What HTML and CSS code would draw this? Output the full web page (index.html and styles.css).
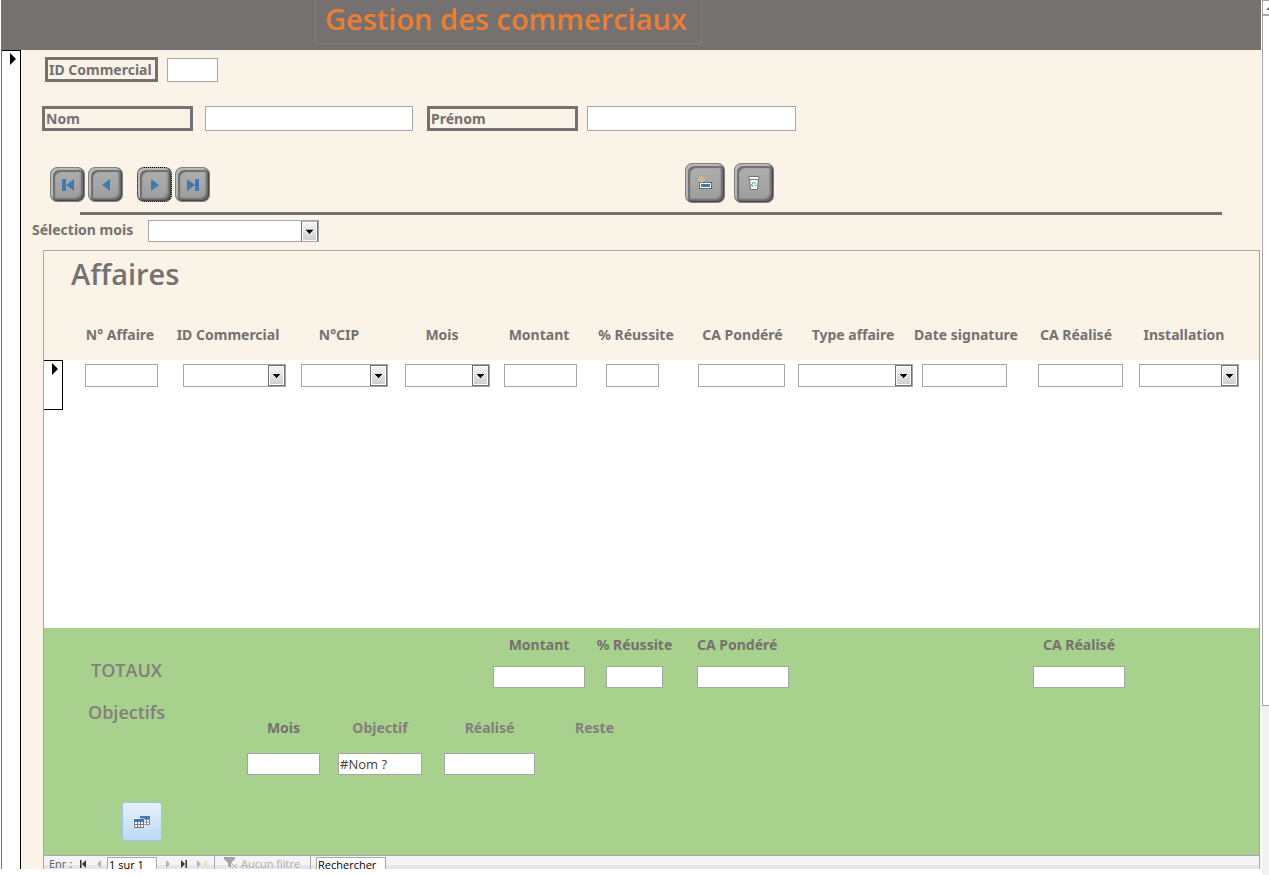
FILE: index.html
```html
<!DOCTYPE html>
<html lang="fr">
<head>
<meta charset="utf-8">
<title>Gestion des commerciaux</title>
<link rel="stylesheet" href="styles.css">
</head>
<body>
<div class="window">
  <div class="form">
    <header class="banner"><h1 class="title">Gestion des commerciaux</h1></header>
    <div class="record">
      <div class="selector"><svg width="6" height="12" viewBox="0 0 6 12"><path d="M0 0L6 6L0 12Z"/></svg></div>
      <main class="detail">
        <div class="row row-id">
          <label class="boxed boxed-id" for="id">ID Commercial</label>
          <input class="field field-id" id="id" type="text">
        </div>
        <div class="row row-name">
          <label class="boxed" for="nom">Nom</label>
          <input class="field field-nom" id="nom" type="text">
          <label class="boxed" for="prenom">Prénom</label>
          <input class="field field-prenom" id="prenom" type="text">
        </div>
        <div class="row toolbar">
          <div class="pair">
            <button class="key" type="button" aria-label="Premier enregistrement"><svg width="14" height="14" viewBox="0 0 14 14"><path d="M1 1h4v12H1zM13 1v12L5 7z"/></svg></button>
            <button class="key" type="button" aria-label="Enregistrement précédent"><svg width="14" height="14" viewBox="0 0 14 14"><path d="M11 1v12L3 7z"/></svg></button>
          </div>
          <div class="pair">
            <button class="key key-focus" type="button" aria-label="Enregistrement suivant"><svg width="14" height="14" viewBox="0 0 14 14"><path d="M3 1v12l8-6z"/></svg></button>
            <button class="key" type="button" aria-label="Dernier enregistrement"><svg width="14" height="14" viewBox="0 0 14 14"><path d="M1 1v12l8-6zM9 1h4v12H9z"/></svg></button>
          </div>
          <div class="actions">
            <button class="key key-large" type="button" aria-label="Nouvel enregistrement"><svg width="16" height="16" viewBox="0 0 16 16"><rect x="2.5" y="7.5" width="12" height="6" fill="#fff" stroke="#666"/><rect x="4" y="9" width="9" height="3" fill="#3f7ab5"/><path d="M4.500 1v7M1 4.500h7M2 2l5 5M7 2L2 7" stroke="#f5c069" fill="none"/><circle cx="4.500" cy="4.500" r="1" fill="#aaa"/></svg></button>
            <button class="key key-large" type="button" aria-label="Supprimer"><svg width="16" height="16" viewBox="0 0 16 16"><path d="M3.500 2.500h9l-1 12h-7z" fill="#fff" stroke="#707070"/><path d="M3 1.500h10v3H3z" fill="#fff" stroke="#777"/><path d="M8 7l2 2.500M10.500 10l-1 1H8.500M7.500 11H6l-.5-1L7.500 7" stroke="#4a9a80" fill="none"/></svg></button>
          </div>
        </div>
        <hr class="rule">
        <div class="row row-month">
          <label for="mois">Sélection mois</label>
          <select class="combo combo-month" id="mois"><option></option></select>
        </div>

        <section class="panel">
          <h2 class="panel-title">Affaires</h2>
          <table class="deals">
            <colgroup><col class="c0"><col class="c1"><col class="c2"><col class="c3"><col class="c4"><col class="c5"><col class="c6"><col class="c7"><col class="c8"><col class="c9"><col class="c10"><col class="c11"><col class="c12"></colgroup>
            <thead><tr><td></td><th>N° Affaire</th><th>ID Commercial</th><th>N°CIP</th><th>Mois</th><th>Montant</th><th>% Réussite</th><th>CA Pondéré</th><th>Type affaire</th><th>Date signature</th><th>CA Réalisé</th><th>Installation</th><td></td></tr></thead>
            <tbody><tr>
              <td><div class="row-selector"><svg width="6" height="12" viewBox="0 0 6 12"><path d="M0 0L6 6L0 12Z"/></svg></div></td>
              <td><input class="field w73" type="text" aria-label="N° Affaire"></td>
              <td><select class="combo w103" aria-label="ID Commercial"><option></option></select></td>
              <td><select class="combo w87" aria-label="N°CIP"><option></option></select></td>
              <td><select class="combo w85" aria-label="Mois"><option></option></select></td>
              <td class="small-indent"><input class="field w73" type="text" aria-label="Montant"></td>
              <td class="wide-indent"><input class="field w53" type="text" aria-label="% Réussite"></td>
              <td class="small-indent"><input class="field w87" type="text" aria-label="CA Pondéré"></td>
              <td class="no-indent"><select class="combo w115" aria-label="Type affaire"><option></option></select></td>
              <td><input class="field w85" type="text" aria-label="Date signature"></td>
              <td><input class="field w85" type="text" aria-label="CA Réalisé"></td>
              <td class="small-indent"><select class="combo w100" aria-label="Installation"><option></option></select></td>
              <td></td>
            </tr></tbody>
          </table>
          <div class="blank"></div>
          <div class="summary">
            <div class="totals">
              <h3 class="side-title">TOTAUX</h3>
              <div class="stack w92"><label for="t1">Montant</label><input class="field" id="t1" type="text"></div>
              <div class="stack w57"><label for="t2">% Réussite</label><input class="field" id="t2" type="text"></div>
              <div class="stack stack-start w92"><label for="t3">CA Pondéré</label><input class="field" id="t3" type="text"></div>
              <div class="stack w92"><label for="t4">CA Réalisé</label><input class="field" id="t4" type="text"></div>
            </div>
            <h3 class="goals-title">Objectifs</h3>
            <div class="goals">
              <div class="stack w73"><label for="g1">Mois</label><input class="field" id="g1" type="text"></div>
              <div class="stack w84 muted"><label for="g2">Objectif</label><input class="field" id="g2" type="text" value="#Nom ?"></div>
              <div class="stack w91 muted"><label for="g3">Réalisé</label><input class="field" id="g3" type="text"></div>
              <div class="rest muted">Reste</div>
            </div>
            <button class="open" type="button" aria-label="Ouvrir la table"><svg width="18" height="14" viewBox="0 0 18 14"><path d="M7 1h10v9H7z" fill="#fff"/><path d="M7 4.500h9.500v5H7M10.500 4v6M13.500 4v6M7 7h9" stroke="#888" fill="none"/><path d="M7 1h10v3H7z" fill="#3f7ab5"/><path d="M.5 3.500h11v9H.5z" fill="#fff"/><path d="M1.500 6v6.500h9V6M4.500 6v6M7.500 6v6M1 9.500h9" stroke="#777" fill="none"/><path d="M1 4h10v3H1z" fill="#3f7ab5"/></svg></button>
          </div>
          <nav class="navbar" aria-label="Enregistrements">
            <label for="pos">Enr :</label>
            <button class="nav" type="button" aria-label="Premier"><svg width="8" height="8" viewBox="0 0 8 8"><path d="M1 0h1.500v8H1zM7 0v8L3 4z"/></svg></button>
            <button class="nav off" type="button" aria-label="Précédent"><svg width="8" height="8" viewBox="0 0 8 8"><path d="M6 0v8L2 4z"/></svg></button>
            <input class="nav-input pos" id="pos" type="text" value="1 sur 1">
            <button class="nav nav-next off" type="button" aria-label="Suivant"><svg width="8" height="8" viewBox="0 0 8 8"><path d="M2 0v8l4-4z"/></svg></button>
            <button class="nav" type="button" aria-label="Dernier"><svg width="8" height="8" viewBox="0 0 8 8"><path d="M1 0v8l4-4zM5.500 0H7v8H5.500z"/></svg></button>
            <button class="nav nav-new off" type="button" aria-label="Nouveau"><svg width="14" height="8" viewBox="0 0 14 8"><path d="M1 0v8l4-4z"/><path d="M9.500 0v8M6 4h7M7 1l5 6M12 1L7 7" stroke="#f0dfa8" fill="none"/></svg></button>
            <button class="filter" type="button"><svg width="15" height="13" viewBox="0 0 15 13"><path d="M1 1h11v2L8 7v5L5 10V7L1 3z"/><path d="M8 7l6 5M14 8l-5 4" stroke="#b4b4b4" fill="none"/></svg>Aucun filtre</button>
            <input class="nav-input search" type="text" value="Rechercher" aria-label="Rechercher">
          </nav>
        </section>
      </main>
    </div>
  </div>
  <div class="scroll"><div class="scroll-up"><svg width="6" height="3" viewBox="0 0 6 3"><path d="M0 3L3 0L6 3Z" fill="#666"/></svg></div><div class="thumb"></div></div>
</div>
</body>
</html>
```
FILE: styles.css
```css
* { box-sizing: border-box; }
body {
  margin: 0;
  background: #fff;
  color: #757170;
  font: 700 14px/18px "Noto Sans", "Open Sans", sans-serif;
}
h1, h2, h3 { margin: 0; font-family: "Open Sans", sans-serif; font-weight: 600; }
svg { display: block; }
button { padding: 0; border: 0; background: none; font: inherit; }

.window { display: flex; gap: 1px; min-height: 100vh; padding-left: 1px; overflow: hidden; }
.form {
  flex: 1;
  min-width: 0;
  display: flex;
  flex-direction: column;
  margin-bottom: 6px;
  border-left: 1px solid #757170;
}
.banner { height: 50px; background: #757170; padding-left: 313px; }
.title {
  width: 387px;
  height: 44px;
  padding-left: 9px;
  border: 1px solid #827e7d;
  border-top: 0;
  color: #ed7d31;
  font-size: 29px;
  line-height: 38px;
  white-space: nowrap;
}
.record { flex: 1; display: flex; }
.selector { width: 19px; padding: 2px 0 0 8px; border-top: 1px solid #000; border-right: 1px solid #000; }
.detail {
  flex: 1;
  min-width: 0;
  display: flex;
  flex-direction: column;
  padding: 7px 1px 0 22px;
  background: #faf3e8;
}
.row { display: flex; align-items: center; }
.field {
  display: block;
  height: 23px;
  min-width: 0;
  padding: 0 1px;
  border: 1px solid #a6a6a6;
  border-radius: 0;
  background: #fff;
  color: #404040;
  font: 400 13px/18px "Open Sans", sans-serif;
}
.combo {
  display: block;
  height: 23px;
  border: 1px solid #a6a6a6;
  border-radius: 0;
  appearance: none;
  background: #fff url("data:image/svg+xml,%3Csvg xmlns='http://www.w3.org/2000/svg' width='17' height='21'%3E%3Cdefs%3E%3ClinearGradient id='g' x2='0' y2='1'%3E%3Cstop stop-color='%23f4f4f4'/%3E%3Cstop offset='1' stop-color='%23cfcfcf'/%3E%3C/linearGradient%3E%3C/defs%3E%3Crect x='.5' y='.5' width='16' height='20' fill='%23fff' stroke='%23707070'/%3E%3Crect x='2' y='2' width='13' height='17' fill='url(%23g)'/%3E%3Cpath d='M5 9h7v1h-1v1h-1v1h-1v1h-1v-1h-1v-1h-1v-1h-1z'/%3E%3C/svg%3E") right center no-repeat;
}
.row-id { gap: 9px; padding-left: 2px; }
.boxed { width: 151px; height: 25px; padding: 0 1px; border: 3px solid #757170; line-height: 19px; white-space: nowrap; }
.boxed-id { width: 113px; }
.field-id { width: 51px; height: 24px; }
.row-name { margin-top: 24px; margin-left: -1px; }
.row-name .field { height: 25px; }
.field-nom { width: 208px; margin: 0 14px 0 12px; }
.field-prenom { width: 209px; margin-left: 9px; }

.toolbar { align-items: flex-end; margin-top: 32px; padding-left: 7px; }
.pair { display: flex; gap: 3px; margin-right: 14px; padding-bottom: 1px; }
.actions { display: flex; gap: 9px; margin-left: 461px; }
.key {
  display: grid;
  place-items: center;
  width: 35px;
  height: 35px;
  border: 1px solid #808080;
  border-radius: 7px;
  background: linear-gradient(#b0b0b0, #9c9c9c);
  box-shadow: inset -1px -1px 1px #484848, inset 2px 2px 1px #bdbdbd, inset -3px -3px 2px #6c6c6c, inset 4px 4px 1px #6c6c6c, inset -4px -4px 1px #a4a4a4;
  fill: #3f7ab5;
}
.key-focus { border: 1px dotted #000; }
.key-large { width: 40px; height: 40px; }
.rule { width: auto; height: 3px; margin: 9px 38px 5px 37px; border: 0; background: #757170; }
.row-month { gap: 11px; margin-left: -11px; }
.row-month label { width: 105px; padding-bottom: 3px; white-space: nowrap; }
.combo-month { width: 171px; height: 22px; }

.panel {
  flex: 1;
  display: flex;
  flex-direction: column;
  margin-top: 8px;
  border: 1px solid #a6a6a6;
  border-bottom: 0;
  background: #fff;
}
.panel-title { height: 74px; padding: 5px 27px; background: #faf3e8; font-size: 29px; line-height: 36px; }
.deals { width: 100%; table-layout: fixed; border-collapse: collapse; }
.deals th, .deals td { padding: 0; white-space: nowrap; }
.deals thead tr { height: 35px; background: #faf3e8; }
.deals th { padding-bottom: 16px; font-weight: 700; }
.deals tbody td { height: 50px; padding-left: 14px; vertical-align: top; }
.deals tbody td:first-child, .deals tbody .no-indent { padding-left: 0; }
.deals tbody .small-indent { padding-left: 11px; }
.deals tbody .wide-indent { padding-left: 21px; }
.deals .field, .deals .combo { margin-top: 4px; }
.row-selector { width: 19px; height: 50px; padding: 2px 0 0 8px; border: 1px solid #000; border-left: 0; }
.c0 { width: 27px; }
.c1 { width: 98px; }
.c2 { width: 118px; }
.c3 { width: 104px; }
.c4 { width: 102px; }
.c5 { width: 92px; }
.c6 { width: 102px; }
.c7 { width: 111px; }
.c8 { width: 110px; }
.c9 { width: 116px; }
.c10 { width: 104px; }
.c11 { width: 112px; }
.c12 { width: 19px; }
.w53 { width: 53px; }
.w57 { width: 57px; }
.w73 { width: 73px; }
.w84 { width: 84px; }
.w85 { width: 85px; }
.w87 { width: 87px; }
.w91 { width: 91px; }
.w92 { width: 92px; }
.w100 { width: 100px; }
.w103 { width: 103px; }
.w115 { width: 115px; }
.blank { flex: 1; }

.summary { padding: 8px 0 14px; background: #a8d18d; }
.totals { display: grid; grid-template-columns: 449fr 113fr 91fr 336fr 226fr; }
.side-title, .goals-title { color: #827f7c; font-size: 18px; line-height: 24px; }
.side-title { padding: 22px 0 0 47px; }
.goals-title { margin-top: 12px; padding-left: 44px; }
.stack { display: flex; flex-direction: column; align-items: center; gap: 12px; white-space: nowrap; }
.stack-start { align-items: flex-start; }
.stack .field { width: 100%; height: 22px; }
.goals { display: flex; gap: 20px; padding-left: 203px; margin-top: -5px; }
.goals .stack { gap: 16px; }
.goals .w73 { margin-right: -2px; }
.goals .w84 { margin-right: 2px; }
.rest { margin-left: 20px; }
.muted { color: #827f7c; }
.open {
  display: grid;
  place-items: center;
  width: 40px;
  height: 39px;
  margin: 27px 0 0 78px;
  border: 1px solid #9cc3ea;
  border-radius: 3px;
  background: linear-gradient(#e6f1fd, #b9d8f8);
}

.navbar {
  display: flex;
  height: 14px;
  padding-left: 5px;
  border-top: 1px solid #a6a9ae;
  background: linear-gradient(#f3f4f6 9px, #e4e6ea 9px);
  color: #555a66;
  font: 400 11px/16px "Open Sans", sans-serif;
}
.navbar label { width: 26px; height: 13px; white-space: nowrap; }
.nav { width: 16px; height: 13px; padding: 3px 4px 0; fill: #333; }
.off { fill: #b4b4b4; }
.nav-next { margin-left: 3px; }
.nav-new { width: 20px; }
.nav-input {
  height: 12px;
  margin-top: 1px;
  padding: 1px 1px 0;
  border: 1px solid #a6a9ae;
  border-bottom: 0;
  border-radius: 0;
  background: #fff;
  color: #000;
  font: 400 11px/11px "Open Sans", sans-serif;
}
.pos { width: 50px; }
.search { width: 70px; margin-left: 5px; }
.filter {
  display: flex;
  gap: 3px;
  width: 97px;
  height: 13px;
  margin-left: 2px;
  padding-left: 8px;
  border: solid #a6a9ae;
  border-width: 0 1px;
  color: #b0b0b0;
  fill: #a4a4a4;
  white-space: nowrap;
}
.scroll { display: flex; flex-direction: column; width: 7px; background: #f2f2f2; overflow: hidden; }
.scroll-up { height: 16px; padding: 6px 0 0 3px; border-left: 1px solid #a6a6a6; border-top: 1px solid #a6a6a6; border-bottom: 2px solid #a6a6a6; background: #fff; }
.thumb { flex: 0 0 80.5%; max-height: 690px; background: #fff; border-left: 1px solid #a6a6a6; border-bottom: 1px solid #a6a6a6; }
```
